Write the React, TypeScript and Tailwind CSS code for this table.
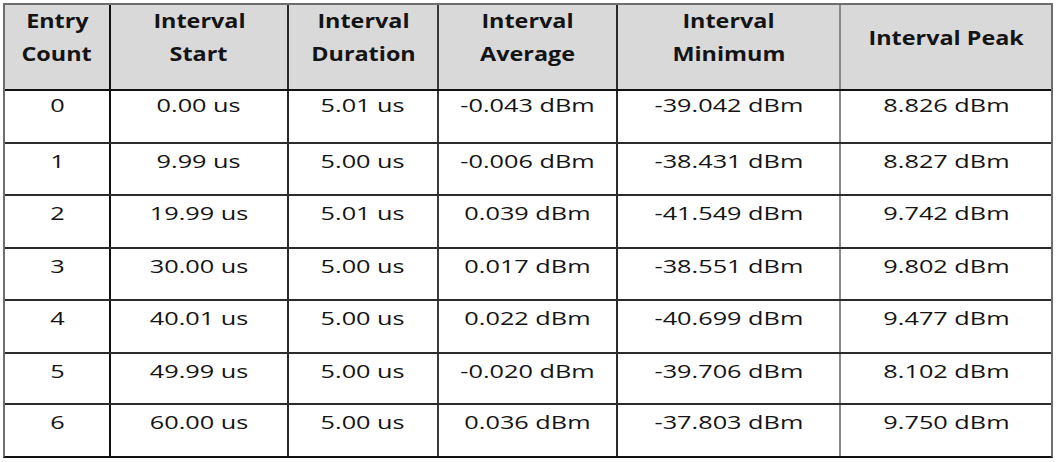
import React from "react";

const headers = [
  ["Entry", "Count"],
  ["Interval", "Start"],
  ["Interval", "Duration"],
  ["Interval", "Average"],
  ["Interval", "Minimum"],
  ["Interval Peak"],
];

const rows = [
  ["0", "0.00 us", "5.01 us", "-0.043 dBm", "-39.042 dBm", "8.826 dBm"],
  ["1", "9.99 us", "5.00 us", "-0.006 dBm", "-38.431 dBm", "8.827 dBm"],
  ["2", "19.99 us", "5.01 us", "0.039 dBm", "-41.549 dBm", "9.742 dBm"],
  ["3", "30.00 us", "5.00 us", "0.017 dBm", "-38.551 dBm", "9.802 dBm"],
  ["4", "40.01 us", "5.00 us", "0.022 dBm", "-40.699 dBm", "9.477 dBm"],
  ["5", "49.99 us", "5.00 us", "-0.020 dBm", "-39.706 dBm", "8.102 dBm"],
  ["6", "60.00 us", "5.00 us", "0.036 dBm", "-37.803 dBm", "9.750 dBm"],
];

const rowHeights = ["h-[53px]", "h-[52px]", "h-[53px]", "h-[52px]", "h-[53px]", "h-[51px]", "h-[51px]"];

// right border per column
const colBorder = [
  "border-r-2 border-r-[#111]",
  "border-r-2 border-r-[#2a2a2a]",
  "border-r-2 border-r-[#3a3a3a]",
  "border-r-2 border-r-[#2a2a2a]",
  "border-r-2 border-r-[#8a8a8a]",
  "",
];

export default function App() {
  return (
    <div className="w-[1057px] h-[462px] bg-white font-['Open_Sans',sans-serif] text-[#141414]">
      <div className="ml-[3px] pt-[3px]">
        <div className="w-[1050px] border-2 border-[#6e6e6e] border-b-[#111]">
          <div className="grid grid-cols-[106px_178px_150px_179px_223px_210px] bg-[#d9d9d9] border-b-2 border-b-[#111]">
            {headers.map((h, i) => (
              <div
                key={i}
                className={`h-[84px] pb-[18px] flex flex-col items-center justify-center text-[19px] leading-[33px] font-bold ${colBorder[i]}`}
              >
                {h.map((line) => (
                  <span key={line} className="inline-block scale-x-[1.23] whitespace-nowrap">
                    {line}
                  </span>
                ))}
              </div>
            ))}
          </div>
          {rows.map((r, ri) => (
            <div
              key={ri}
              className={`grid grid-cols-[106px_178px_150px_179px_223px_210px] ${rowHeights[ri]} ${
                ri < rows.length - 1 ? "border-b-2 border-b-[#2b2b2b]" : ""
              }`}
            >
              {r.map((c, ci) => (
                <div
                  key={ci}
                  className={`flex justify-center text-[19px] leading-[26px] font-medium ${ri === 0 ? "pt-[1px]" : "pt-[4px]"} ${colBorder[ci]}`}
                >
                  <span className="inline-block scale-x-[1.33] whitespace-nowrap">{c}</span>
                </div>
              ))}
            </div>
          ))}
        </div>
      </div>
    </div>
  );
}
